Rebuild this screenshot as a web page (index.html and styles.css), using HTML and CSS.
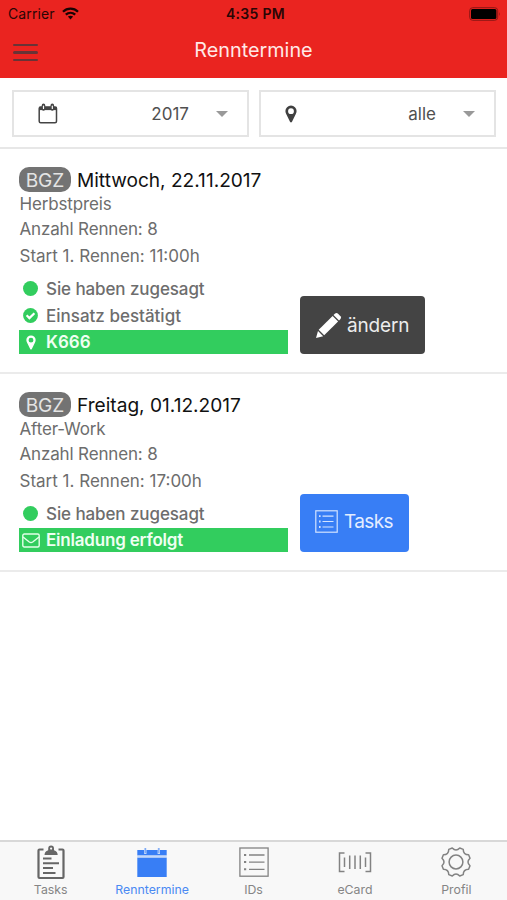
FILE: index.html
```html
<!DOCTYPE html>
<html lang="de">
<head>
    <meta charset="UTF-8">
    <meta name="viewport" content="width=device-width, initial-scale=1.0">
    <title>Renntermine</title>
    <link rel="stylesheet" href="styles.css">
</head>
<body>
    <header class="header">
        <div class="status-bar">
            <div class="carrier">
                <span>Carrier</span>
                <svg width="17" height="13" viewBox="0 0 17 13" fill="none" stroke="#190303" stroke-width="2.3">
                    <path d="M1 4.7C5.2.6 11.8.6 16 4.7"/>
                    <path d="M3.8 7.7c2.7-2.5 6.7-2.5 9.4 0"/>
                    <path d="M5.9 9.6c1.500-1.300 3.700-1.300 5.200 0L8.500 12.400z" fill="#190303" stroke="none"/>
                </svg>
            </div>
            <div class="clock">4:35 PM</div>
            <svg class="battery" width="32" height="14" viewBox="0 0 32 14">
                <rect x=".7" y=".7" width="28" height="12.600" rx="3" fill="none" stroke="#8d1714"/>
                <rect x="2" y="2" width="25.400" height="10" rx="1.500" fill="#000"/>
                <path d="M30 5v4q1.500-2 0-4z" fill="#8d1714"/>
            </svg>
        </div>
        <div class="nav-bar">
            <div class="menu-button"><i></i><i></i><i></i></div>
            <h1>Renntermine</h1>
        </div>
    </header>

    <div class="filters">
        <div class="select">
            <svg width="20" height="21" viewBox="0 0 20 21" fill="none" stroke="#444">
                <rect x="1.200" y="4" width="17.300" height="15.700" rx="1.500" stroke-width="1.500"/>
                <path d="M1 5.500h17.700" stroke-width="3.200"/>
                <path d="M5.500 6V2.400M14.300 6V2.400" stroke-width="3.600" stroke-linecap="round"/>
                <path d="M5.500 5.500V3M14.300 5.500V3" stroke="#fff" stroke-width="1.200" stroke-linecap="round"/>
            </svg>
            <span>2017</span>
            <b class="caret"></b>
        </div>
        <div class="select">
            <svg class="pin" width="12" height="18" viewBox="0 0 12 18">
                <path fill="#404040" fill-rule="evenodd" d="M6 .5a5.600 5.600 0 0 1 5.600 5.600c0 1-.3 1.900-.8 2.900L7 16.800q-1 1.400-2 0L1.200 9C.7 8 .4 7.100.4 6.100A5.600 5.600 0 0 1 6 .5zm0 2.800a2.900 2.900 0 1 0 0 5.800 2.900 2.900 0 0 0 0-5.800z"/>
            </svg>
            <span>alle</span>
            <b class="caret"></b>
        </div>
    </div>

    <main class="list">
        <section class="race">
            <div class="race-info">
                <h2><span class="badge">BGZ</span><span class="date">Mittwoch, 22.11.2017</span></h2>
                <p class="name">Herbstpreis</p>
                <p class="count">Anzahl Rennen: 8</p>
                <p class="start">Start 1. Rennen: 11:00h</p>
                <ul class="states">
                    <li><span class="icon"><i class="dot"></i></span><span class="accepted">Sie haben zugesagt</span></li>
                    <li>
                        <span class="icon">
                            <svg width="15" height="15" viewBox="0 0 15 15">
                                <circle cx="7.500" cy="7.500" r="7.400" fill="#32cd5e"/>
                                <path d="M3.600 7.300l2.800 2.800 5-4.900" fill="none" stroke="#fff" stroke-width="2.200"/>
                            </svg>
                        </span>
                        <span class="confirmed">Einsatz bestätigt</span>
                    </li>
                    <li class="bar">
                        <span class="icon">
                            <svg width="10" height="15" viewBox="0 0 12 18">
                                <path fill="#fff" fill-rule="evenodd" d="M6 .5a5.600 5.600 0 0 1 5.600 5.600c0 1-.3 1.900-.8 2.900L7 16.800q-1 1.400-2 0L1.200 9C.7 8 .4 7.100.4 6.100A5.600 5.600 0 0 1 6 .5zm0 2.800a2.900 2.900 0 1 0 0 5.800 2.900 2.900 0 0 0 0-5.800z"/>
                            </svg>
                        </span>
                        <span class="place">K666</span>
                    </li>
                </ul>
            </div>
            <button class="button dark">
                <svg width="27" height="27" viewBox="0 0 27 27" fill="#fff">
                    <path d="M1 26l2-7 5.200 5.200z"/>
                    <path d="M3.700 17.800L17.600 4l5.500 5.500L9.200 23.300z"/>
                    <path d="M18.500 3.100l1.600-1.600q1.400-1 2.700 0l2.700 2.700q1.200 1.300 0 2.700L24 8.600z"/>
                </svg>
                <span>ändern</span>
            </button>
        </section>

        <section class="race">
            <div class="race-info">
                <h2><span class="badge">BGZ</span><span class="date">Freitag, 01.12.2017</span></h2>
                <p class="name">After-Work</p>
                <p class="count">Anzahl Rennen: 8</p>
                <p class="start">Start 1. Rennen: 17:00h</p>
                <ul class="states">
                    <li><span class="icon"><i class="dot"></i></span><span class="accepted">Sie haben zugesagt</span></li>
                    <li class="bar">
                        <span class="icon">
                            <svg width="18" height="15" viewBox="0 0 18 15" fill="none" stroke="#e4ffe9" stroke-width="1.400">
                                <rect x=".8" y="1" width="16.400" height="13" rx="1.500"/>
                                <path d="M1 4l6.300 5q1.700 1.200 3.400 0L17 4"/>
                            </svg>
                        </span>
                        <span class="invited">Einladung erfolgt</span>
                    </li>
                </ul>
            </div>
            <button class="button blue">
                <svg width="23" height="23" viewBox="0 0 23 23" fill="none" stroke="#d3e3ff" stroke-width="1.200">
                    <rect x=".8" y=".8" width="21.400" height="21.400"/>
                    <path d="M7.500 6.200h11M7.500 11.500h11M7.500 17h11"/>
                    <path d="M4 6.200h1.600M4 11.500h1.600M4 17h1.600" stroke-width="1.800"/>
                </svg>
                <span>Tasks</span>
            </button>
        </section>
    </main>

    <nav class="tabs">
        <a class="tab">
            <svg width="34" height="36" viewBox="0 0 34 36" fill="none" stroke="#666">
                <path d="M9.500 5.500H5.500q-1 0-1 1v26.500q0 1 1 1h23q1 0 1-1V6.500q0-1-1-1h-4" stroke-width="2.200"/>
                <path d="M10.500 11q0-3.500 3.700-4.800V4.500a2.900 2.900 0 0 1 5.800 0v1.700q3.700 1.300 3.700 4.800z" fill="#666" stroke="none"/>
                <circle cx="17.100" cy="4.600" r="1.100" fill="#f8f8f8" stroke="none"/>
                <path d="M9 14.500h8.500M9 19.300h16M9 24.100h10M9 29h12.500" stroke-width="2"/>
            </svg>
            <span>Tasks</span>
        </a>
        <a class="tab active">
            <svg width="34" height="36" viewBox="0 0 34 36" fill="#387ef5">
                <path d="M2.300 6h29.400v5.500H2.300z"/>
                <path d="M2.300 13.500h29.400V33H2.300z"/>
                <path d="M10.300 4v6M23.800 4v6" stroke="#c4d8fa" stroke-width="2.400"/>
                <path d="M10.300 4v5M23.800 4v5" stroke="#6ea0f6" stroke-width="1"/>
                <path d="M2.300 12.500h29.400" stroke="#c4d8fa" stroke-width="1.800"/>
            </svg>
            <span>Renntermine</span>
        </a>
        <a class="tab">
            <svg width="34" height="36" viewBox="0 0 34 36" fill="none" stroke="#828282" stroke-width="1.300">
                <rect x="2.900" y="4" width="28.200" height="28.200"/>
                <path d="M12 11h15.500M12 18.100h15.500M12 25.300h15.500"/>
                <path d="M7 11h2.200M7 18.100h2.200M7 25.300h2.200" stroke-width="2"/>
            </svg>
            <span>IDs</span>
        </a>
        <a class="tab">
            <svg width="34" height="36" viewBox="0 0 34 36" fill="none" stroke="#828282" stroke-width="1.500">
                <path d="M6.500 9H1.500v18.500h5M27.500 9h5v18.500h-5"/>
                <path d="M6.500 13.500v9.500M11.700 11.500v13.500M17 11.500v13.500M22.300 11.500v13.500M27.500 13.500v9.500"/>
            </svg>
            <span>eCard</span>
        </a>
        <a class="tab">
            <svg width="34" height="36" viewBox="-17 -18 34 36" fill="none" stroke="#828282" stroke-width="1.500" stroke-linejoin="round">
                <path d="M14 3.750L12.600 7.250Q7.300 7.300 7.250 12.600L3.750 14Q0 10-3.750 14L-7.250 12.600Q-7.300 7.300-12.600 7.250L-14 3.750Q-10 0-14-3.750L-12.600-7.250Q-7.300-7.300-7.250-12.600L-3.750-14Q0-10 3.750-14L7.250-12.600Q7.300-7.300 12.600-7.250L14-3.750Q10 0 14 3.750z"/>
                <circle r="6.900"/>
            </svg>
            <span>Profil</span>
        </a>
    </nav>
</body>
</html>
```
FILE: styles.css
```css
* {
    box-sizing: border-box;
}
body {
    display: flex;
    flex-direction: column;
    height: 900px;
    margin: 0;
    font-family: Inter, "Liberation Sans", sans-serif;
    color: #6d6d6d;
    background: #fff;
    overflow: hidden;
}
h1, h2, p, ul {
    margin: 0;
    padding: 0;
    font-weight: 400;
}
svg {
    display: block;
    flex: none;
}
.header {
    height: 78px;
    background: #ea2420;
}
.status-bar {
    display: grid;
    grid-template-columns: 1fr auto 1fr;
    align-items: center;
    height: 27px;
    padding: 0 6px 0 8px;
    font-size: 14px;
    color: #2a0605;
}
.carrier {
    display: flex;
    align-items: center;
    gap: 7px;
    letter-spacing: 0.1px;
}
.clock {
    padding-left: 2px;
    font-weight: 600;
    letter-spacing: 0.3px;
}
.battery {
    justify-self: end;
}
.nav-bar {
    display: grid;
    grid-template-columns: 1fr auto 1fr;
    align-items: center;
    height: 46px;
    padding: 0 13px;
}
.nav-bar h1 {
    font-size: 19.8px;
    line-height: 46px;
    color: #ffe9e7;
}
.menu-button {
    display: flex;
    flex-direction: column;
    gap: 5px;
    padding-top: 5px;
}
.menu-button i {
    width: 25px;
    height: 2.5px;
    border-radius: 2px;
    background: #693336;
}
.filters {
    display: flex;
    gap: 10px;
    height: 71px;
    padding: 12px 11px 10px 12px;
    border-bottom: 2px solid #e7e7e7;
}
.select {
    display: flex;
    flex: 1;
    align-items: center;
    padding: 0 19px 0 24px;
    border: 2px solid #e4e4e4;
    font-size: 17px;
    color: #505050;
}
.select span {
    margin-left: auto;
}
.caret {
    margin-left: 27px;
    border: 6px solid transparent;
    border-top-color: #999;
    border-bottom: 0;
}
.list {
    flex: 1;
}
.race {
    display: flex;
    align-items: flex-end;
    gap: 12px;
    padding: 18px 19px;
    border-bottom: 2px solid #ebebeb;
}
.race-info {
    width: 269px;
}
.race h2 {
    display: flex;
    align-items: center;
    gap: 6px;
    height: 25px;
    font-size: 19.1px;
    color: #111;
    white-space: nowrap;
}
.badge {
    width: 52px;
    height: 25px;
    border-radius: 10px;
    line-height: 26px;
    text-align: center;
    color: #e4e4e4;
    background: #737373;
}
.race p {
    height: 25px;
    padding-left: 0.5px;
    font-size: 17px;
    line-height: 25px;
    letter-spacing: -0.15px;
    white-space: nowrap;
}
.race .start {
    height: 29px;
    line-height: 29px;
    letter-spacing: 0;
}
.states {
    padding-top: 4px;
    list-style: none;
    font-size: 17px;
}
.states li {
    display: flex;
    align-items: center;
    height: 27px;
    font-weight: 500;
    letter-spacing: -0.1px;
}
.states .bar {
    height: 24px;
    margin-top: 1px;
    color: #effff2;
    font-weight: 600;
    background: #32cd5e;
}
.states .confirmed,
.states .place {
    letter-spacing: 0;
}
.states .invited {
    letter-spacing: -0.2px;
}
.icon {
    display: flex;
    justify-content: center;
    width: 23px;
    margin-right: 4px;
}
.dot {
    width: 15px;
    height: 15px;
    border-radius: 50%;
    background: #32cd5e;
}
.button {
    display: flex;
    align-items: center;
    height: 58px;
    padding: 0 15px;
    border: 0;
    border-radius: 4px;
    font: 19px Inter, "Liberation Sans", sans-serif;
}
.dark {
    width: 125px;
    gap: 5px;
    letter-spacing: -0.15px;
    color: #ececec;
    background: #444;
}
.blue {
    width: 109px;
    gap: 6px;
    padding-bottom: 3px;
    letter-spacing: -0.6px;
    color: #e4edff;
    background: #387ef5;
}
.tabs {
    display: flex;
    height: 60px;
    border-top: 2px solid #d8d8d8;
    background: #f8f8f8;
}
.tab {
    display: flex;
    flex: 1;
    flex-direction: column;
    align-items: center;
    padding-top: 2px;
    font-size: 12.3px;
    color: #858585;
}
.tab span {
    line-height: 19px;
}
.active {
    color: #4a89f3;
}
```
